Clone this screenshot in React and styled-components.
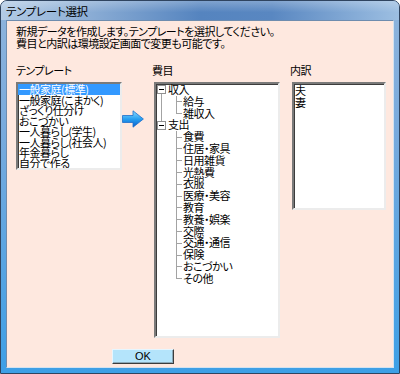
import React from 'react'
import styled, { createGlobalStyle } from 'styled-components'

const GlobalStyle = createGlobalStyle`
  html, body {
    margin: 0;
    padding: 0;
    background: #ffffff;
  }
  body {
    font-family: "Noto Sans CJK JP", "Liberation Sans", sans-serif;
    font-feature-settings: "palt";
    color: #000;
  }
`;

const Window = styled.div`
  width: 400px;
  height: 374px;
  box-sizing: border-box;
  border: 1px solid #2f4460;
  border-radius: 7px 7px 0 0;
  background: linear-gradient(to bottom, #8fb4dc 0%, #78aadd 35%, #3d9fe6 100%);
  padding: 0 5px 5px;
  display: flex;
  flex-direction: column;
  overflow: hidden;
`;

const TitleBar = styled.div`
  height: 19px;
  margin: 0 -5px;
  padding-left: 5px;
  display: flex;
  align-items: center;
  font-size: 11.5px;
  letter-spacing: -0.3px;
  background:
    linear-gradient(to bottom, rgba(255,255,255,0.25), rgba(255,255,255,0) 60%),
    linear-gradient(to right, #b3cbe5 0%, #93b3d8 18%, #5584bf 50%, #5987c1 68%, #9dbfe2 100%);
`;

const Client = styled.div`
  flex: 1;
  background: #fee8df;
  border: 1px solid;
  border-color: #6e8cae #d4e2ef #d4e2ef #6e8cae;
  padding: 5px 0 0 9px;
  font-size: 11px;
  letter-spacing: -0.5px;
`;

const Message = styled.div`
  line-height: 11.5px;
  white-space: nowrap;
`;

const Panels = styled.div`
  display: flex;
  align-items: flex-start;
  margin-top: 16px;
`;

const Column = styled.div`
  width: ${p => p.$w}px;
  margin-left: ${p => p.$ml || 0}px;
  flex: none;
`;

const Label = styled.div`
  line-height: 11px;
  margin-left: ${p => p.$shift || 0}px;
  margin-bottom: 6px;
`;

const Box = styled.div`
  box-sizing: border-box;
  height: ${p => p.$h}px;
  background: #fff;
  border: 2px solid;
  border-color: #7a7a7a #ececec #ececec #7a7a7a;
  box-shadow: inset 1px 1px 0 #3c3c3c;
  overflow: hidden;
`;

const ListItem = styled.div`
  line-height: 10.5px;
  height: 10.5px;
  padding-left: 1px;
  white-space: nowrap;
  background: ${p => (p.$selected ? '#3399ff' : 'transparent')};
  color: ${p => (p.$selected ? '#fff' : '#000')};
`;

const DetailItem = styled.div`
  line-height: 12px;
  height: 12px;
  padding-left: 1px;
`;

const ArrowSlot = styled.div`
  width: 32px;
  flex: none;
  padding-top: 45px;
`;

const TreeRow = styled.div`
  display: flex;
  height: 11.8px;
  line-height: 11.8px;
  white-space: nowrap;
`;

const line = '#a3a3a3';

const RootGutter = styled.span`
  width: 12px;
  flex: none;
  display: flex;
  align-items: center;
  padding-left: 1px;
  box-sizing: border-box;
  background: ${p =>
    p.$down
      ? `linear-gradient(${line},${line}) no-repeat 5px 100% / 1px 50%`
      : p.$up
      ? `linear-gradient(${line},${line}) no-repeat 5px 0 / 1px 50%`
      : 'none'};
`;

const Expander = styled.span`
  width: 9px;
  height: 9px;
  box-sizing: border-box;
  border: 1px solid #919191;
  background: linear-gradient(#000, #000) no-repeat center / 5px 1px, #fff;
`;

const Trunk = styled.span`
  width: 12px;
  flex: none;
  background: ${p =>
    p.$on ? `linear-gradient(${line},${line}) no-repeat 5px 0 / 1px 100%` : 'none'};
`;

const Branch = styled.span`
  width: 14px;
  flex: none;
  background:
    linear-gradient(${line},${line}) no-repeat 8px 0 / 1px ${p => (p.$last ? '50%' : '100%')},
    linear-gradient(${line},${line}) no-repeat 8px 50% / 6px 1px;
`;

const TreeText = styled.span`
  padding-left: ${p => p.$pad || 0}px;
`;

const Footer = styled.div`
  padding: 9px 0 0 96px;
`;

const OkButton = styled.button`
  width: 62px;
  height: 15px;
  box-sizing: border-box;
  padding: 0;
  background: #b4e4fb;
  border: 1px solid;
  border-color: #e6f6ff #3c3c3c #3c3c3c #e6f6ff;
  box-shadow: inset -1px -1px 0 #8aa8b8;
  font-family: "Liberation Sans", sans-serif;
  font-size: 11px;
  line-height: 13px;
  color: #000;
`;

const Arrow = () => (
  <svg width="22" height="18" viewBox="0 0 22 18">
    <defs>
      <linearGradient id="arrowFill" x1="0" y1="0" x2="0" y2="1">
        <stop offset="0" stopColor="#8edcff" />
        <stop offset="0.5" stopColor="#27a0f0" />
        <stop offset="1" stopColor="#0a5fcb" />
      </linearGradient>
    </defs>
    <path
      d="M0.5 5.5 H11 V0.8 L21.4 9 L11 17.2 V12.5 H0.5 Z"
      fill="url(#arrowFill)"
      stroke="#1c6fcc"
      strokeWidth="0.8"
    />
  </svg>
)

const templates = [
  '一般家庭(標準)',
  '一般家庭(こまかく)',
  'ざっくり仕分け',
  'おこづかい',
  '一人暮らし(学生)',
  '一人暮らし(社会人)',
  '年金暮らし',
  '自分で作る',
]

const tree = [
  { name: '収入', children: ['給与', '雑収入'] },
  {
    name: '支出',
    children: [
      '食費', '住居・家具', '日用雑貨', '光熱費', '衣服', '医療・美容', '教育',
      '教養・娯楽', '交際', '交通・通信', '保険', 'おこづかい', 'その他',
    ],
  },
]

const Tree = () => (
  <>
    {tree.map((node, i) => {
      const lastRoot = i === tree.length - 1
      return (
        <React.Fragment key={node.name}>
          <TreeRow>
            <RootGutter $down={!lastRoot} $up={i > 0}>
              <Expander />
            </RootGutter>
            <TreeText>{node.name}</TreeText>
          </TreeRow>
          {node.children.map((c, j) => (
            <TreeRow key={c}>
              <Trunk $on={!lastRoot} />
              <Branch $last={j === node.children.length - 1} />
              <TreeText $pad={1}>{c}</TreeText>
            </TreeRow>
          ))}
        </React.Fragment>
      )
    })}
  </>
)

export default function App() {
  return (
    <>
      <GlobalStyle />
      <Window>
        <TitleBar>テンプレート選択</TitleBar>
        <Client>
          <Message>
            新規データを作成します。テンプレートを選択してください。
            <br />
            費目と内訳は環境設定画面で変更も可能です。
          </Message>
          <Panels>
            <Column $w={106}>
              <Label>テンプレート</Label>
              <Box $h={88}>
                {templates.map((t, i) => (
                  <ListItem key={t} $selected={i === 0}>{t}</ListItem>
                ))}
              </Box>
            </Column>
            <ArrowSlot>
              <Arrow />
            </ArrowSlot>
            <Column $w={126}>
              <Label $shift={-2}>費目</Label>
              <Box $h={256}>
                <Tree />
              </Box>
            </Column>
            <Column $w={94} $ml={12}>
              <Label $shift={-2}>内訳</Label>
              <Box $h={128}>
                <DetailItem>夫</DetailItem>
                <DetailItem>妻</DetailItem>
              </Box>
            </Column>
          </Panels>
          <Footer>
            <OkButton>OK</OkButton>
          </Footer>
        </Client>
      </Window>
    </>
  )
}
